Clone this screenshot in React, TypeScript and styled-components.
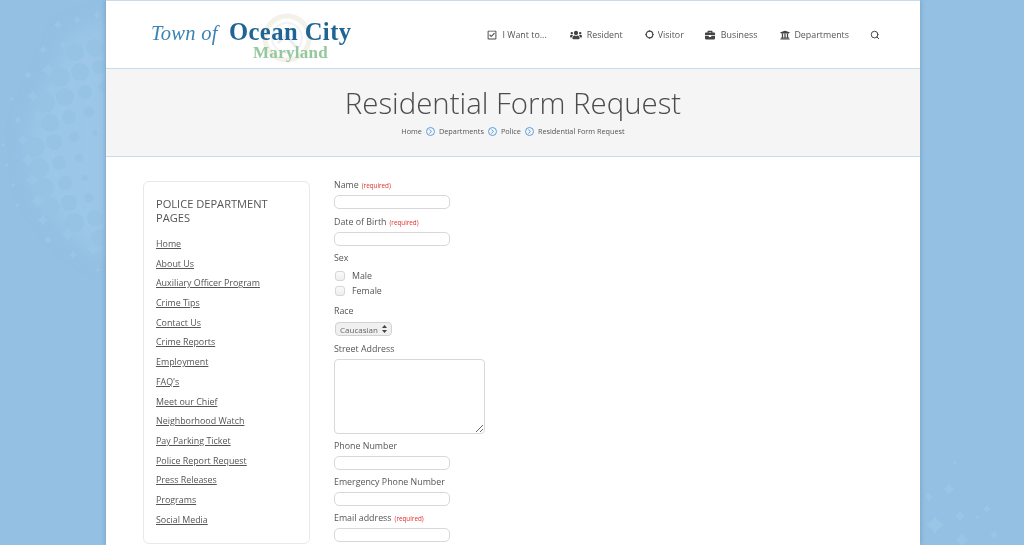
import { createGlobalStyle, styled } from "styled-components";
import {
  FaBriefcase,
  FaRegCheckSquare,
  FaUniversity,
  FaUsers,
} from "react-icons/fa";
import { FiSearch, FiChevronRight } from "react-icons/fi";
import type { ReactNode } from "react";

const GlobalStyle = createGlobalStyle`
  html, body {
    margin: 0;
    height: 545px;
    overflow: hidden;
    background: #93c0e3;
    font-family: "Open Sans", "Liberation Sans", sans-serif;
    color: #555;
  }
  * { box-sizing: border-box; }
`;

const Backdrop = styled.svg`
  position: fixed;
  inset: 0;
  width: 1024px;
  height: 545px;
`;

const Page = styled.div`
  position: relative;
  width: 814px;
  height: 545px;
  margin-left: 106px;
  overflow: hidden;
  background: #fff;
  border-top: 1px solid #c7dcee;
  box-shadow: 0 0 5px rgba(60, 80, 105, 0.35);
`;

const Header = styled.header`
  height: 68px;
  display: flex;
  align-items: flex-start;
  justify-content: space-between;
  padding: 0 40px 0 45px;
  border-bottom: 1px solid #c7dcee;
`;

const Logo = styled.div`
  position: relative;
  width: 206px;
  height: 55px;
  margin-top: 18px;
  font-family: "Liberation Serif", serif;
  white-space: nowrap;
`;

const Seal = styled.svg`
  position: absolute;
  left: 111px;
  top: -6px;
  width: 50px;
  height: 50px;
`;

const LogoLine = styled.div`
  position: relative;
  display: flex;
  align-items: baseline;
  gap: 11px;
  line-height: 26px;
`;

const LogoTown = styled.span`
  font-size: 20.5px;
  font-style: italic;
  color: #3a82b5;
  letter-spacing: 0.3px;
`;

const LogoCity = styled.span`
  font-size: 24.6px;
  font-weight: bold;
  color: #1f6493;
  letter-spacing: 0.45px;
`;

const LogoState = styled.div`
  position: relative;
  margin-left: 102px;
  font-size: 17px;
  line-height: 14px;
  font-weight: bold;
  color: #93c89d;
  letter-spacing: 0.3px;
`;

const Nav = styled.nav`
  display: flex;
  align-items: center;
  height: 67px;
  font-size: 8.9px;
  color: #555;
`;

const NavItem = styled.div<{ $gap: number; $after: number }>`
  display: flex;
  align-items: center;
  gap: ${(p) => p.$gap}px;
  margin-right: ${(p) => p.$after}px;
  svg { color: #444; flex: none; }
`;

const TitleBand = styled.section`
  height: 88px;
  padding-top: 15px;
  background: #f5f5f5;
  border-bottom: 1px solid #c7dcee;
  text-align: center;
`;

const Title = styled.h1`
  margin: 0;
  font-size: 29.4px;
  line-height: 38px;
  font-weight: 300;
  color: #4c4c4c;
`;

const Crumbs = styled.div`
  display: flex;
  justify-content: center;
  align-items: center;
  gap: 4px;
  margin-top: 2px;
  font-size: 7.3px;
  line-height: 14px;
  color: #555;
`;

const CrumbDot = styled.span`
  width: 9px;
  height: 9px;
  display: inline-flex;
  align-items: center;
  justify-content: center;
  border: 1px solid #5a9fe0;
  border-radius: 50%;
  color: #3d8be0;
`;

const Body = styled.main`
  display: flex;
  align-items: flex-start;
  gap: 24px;
  padding: 21px 0 0 37px;
`;

const Sidebar = styled.aside`
  flex: none;
  width: 167px;
  margin-top: 3px;
  padding: 15px 12px 14px 12px;
  background: #fff;
  border: 1px solid #e8e8e8;
  border-radius: 6px;
`;

const SidebarTitle = styled.h3`
  margin: 0 0 9px;
  font-size: 11.1px;
  line-height: 14px;
  font-weight: 400;
  color: #555;
`;

const SideLink = styled.a`
  display: block;
  height: 19.7px;
  font-size: 8.9px;
  line-height: 19.7px;
  color: #555;
  text-decoration: underline;
`;

const Form = styled.form`
  flex: none;
  width: 300px;
`;

const Field = styled.div<{ $after?: number }>`
  margin-bottom: ${(p) => p.$after ?? 5}px;
`;

const Label = styled.label`
  display: block;
  height: 14px;
  margin-bottom: 3px;
  font-size: 8.85px;
  line-height: 15px;
  color: #555;
`;

const Required = styled.span`
  margin-left: 3px;
  font-size: 6.3px;
  color: #e0302a;
`;

const TextInput = styled.input`
  display: block;
  width: 116px;
  height: 14px;
  padding: 0 4px;
  background: #fff;
  border: 1px solid #d8d8d8;
  border-radius: 5px;
  outline: none;
`;

const TextArea = styled.textarea`
  display: block;
  width: 151px;
  height: 75px;
  background: #fff;
  border: 1px solid #d8d8d8;
  border-radius: 4px;
  outline: none;
  resize: both;
  margin: 0;
`;

const CheckRow = styled.div`
  display: flex;
  align-items: center;
  gap: 7px;
  height: 15.5px;
  padding-left: 1px;
  font-size: 8.85px;
  color: #555;
`;

const CheckBox = styled.span`
  width: 10px;
  height: 10px;
  background: linear-gradient(#fafafa, #eeeeee);
  border: 1px solid #d6d6d6;
  border-radius: 3px;
`;

const SelectBox = styled.div`
  display: flex;
  align-items: center;
  justify-content: space-between;
  width: 57px;
  height: 14px;
  margin: 4px 0 0 1px;
  padding: 0 4px 0 4px;
  background: #f0f0f0;
  border: 1px solid #d2d2d2;
  border-radius: 4px;
  font-size: 8px;
  color: #666;
`;

const SelectArrows = styled.svg`
  width: 5px;
  height: 8px;
  color: #444;
`;

const dots: [number, number, number][] = [
  [75, 52, 9], [95, 48, 9], [60, 77, 10], [80, 72, 9], [99, 67, 7], [45, 103, 10],
  [65, 97, 9], [85, 92, 7], [103, 87, 5], [50, 123, 9], [69, 117, 7], [89, 112, 5],
  [35, 147, 10], [54, 142, 8], [74, 137, 5], [95, 133, 3], [39, 168, 10], [59, 163, 7],
  [79, 158, 4], [44, 188, 10], [65, 183, 7], [85, 178, 3], [50, 207, 10], [69, 203, 8],
  [89, 198, 5], [74, 223, 10], [95, 218, 8], [100, 238, 9],
];

const stars: [number, number, number][] = [
  [83, 41, 5], [63, 45, 3], [48, 70, 5], [43, 50, 3], [28, 75, 3], [52, 90, 5],
  [33, 96, 4], [18, 120, 3], [37, 115, 3], [23, 140, 4], [28, 160, 5], [32, 180, 5],
  [38, 201, 5], [43, 220, 4], [68, 234, 5], [93, 249, 5], [48, 240, 3], [73, 255, 3],
  [58, 25, 3], [77, 20, 3], [97, 15, 3], [12, 99, 2], [7, 165, 2], [13, 185, 2],
  [17, 205, 2], [3, 145, 2], [98, 270, 2],
  [929, 497, 3], [955, 463, 2], [949, 489, 4], [928, 495, 2], [960, 516, 4],
  [987, 509, 3], [994, 535, 3], [977, 517, 2], [935, 525, 7], [962, 540, 5],
];

const starPath = (x: number, y: number, r: number) =>
  `M${x} ${y - r}Q${x + r * 0.35} ${y - r * 0.35} ${x + r} ${y}Q${x + r * 0.35} ${y + r * 0.35} ${x} ${y + r}Q${x - r * 0.35} ${y + r * 0.35} ${x - r} ${y}Q${x - r * 0.35} ${y - r * 0.35} ${x} ${y - r}Z`;

const links = [
  "Home",
  "About Us",
  "Auxiliary Officer Program",
  "Crime Tips",
  "Contact Us",
  "Crime Reports",
  "Employment",
  "FAQ's",
  "Meet our Chief",
  "Neighborhood Watch",
  "Pay Parking Ticket",
  "Police Report Request",
  "Press Releases",
  "Programs",
  "Social Media",
];

const crumbs = ["Home", "Departments", "Police", "Residential Form Request"];

function VisitorIcon() {
  return (
    <svg width="9" height="9" viewBox="0 0 18 18" fill="none">
      <circle cx="9" cy="9" r="6.6" stroke="currentColor" strokeWidth="2.4" />
      <path
        d="M9 0v3M9 15v3M0 9h3M15 9h3"
        stroke="currentColor"
        strokeWidth="1.4"
      />
    </svg>
  );
}

function TextField(props: { label: string; required?: boolean; after?: number }) {
  return (
    <Field $after={props.after}>
      <Label>
        {props.label}
        {props.required && <Required>(required)</Required>}
      </Label>
      <TextInput type="text" />
    </Field>
  );
}

function NavEntry(props: {
  icon: ReactNode;
  label: string;
  gap: number;
  after: number;
}) {
  return (
    <NavItem $gap={props.gap} $after={props.after}>
      {props.icon}
      {props.label}
    </NavItem>
  );
}

export default function App() {
  return (
    <>
      <GlobalStyle />
      <Backdrop viewBox="0 0 1024 545">
        <defs>
          <filter id="soft" x="-30%" y="-30%" width="160%" height="160%">
            <feGaussianBlur stdDeviation="10" />
          </filter>
        </defs>
        <path
          d="M70 35L110 20V260L75 240L35 190L28 130Z"
          fill="#9cc6e7"
          filter="url(#soft)"
        />
        <g fill="#96c2e4">
          {dots.map(([x, y, r]) => (
            <circle key={`${x}-${y}`} cx={x} cy={y} r={r} />
          ))}
        </g>
        <g fill="#9bc5e6">
          {stars.map(([x, y, r]) => (
            <path key={`${x}-${y}`} d={starPath(x, y, r * 1.3)} />
          ))}
        </g>
      </Backdrop>
      <Page>
        <Header>
          <Logo>
            <Seal viewBox="0 0 50 50" fill="none">
              <circle cx="25" cy="25" r="22" stroke="#f3f1e8" strokeWidth="5" />
              <circle cx="25" cy="25" r="15" stroke="#f0f2f5" strokeWidth="2" />
              <path d="M16 30l8-8 10 12" stroke="#ebeef1" strokeWidth="3" />
            </Seal>
            <LogoLine>
              <LogoTown>Town of</LogoTown>
              <LogoCity>Ocean City</LogoCity>
            </LogoLine>
            <LogoState>Maryland</LogoState>
          </Logo>
          <Nav>
            <NavEntry icon={<FaRegCheckSquare size={10} />} label="I Want to..." gap={5} after={23} />
            <NavEntry icon={<FaUsers size={12} />} label="Resident" gap={5} after={22} />
            <NavEntry icon={<VisitorIcon />} label="Visitor" gap={4} after={21} />
            <NavEntry icon={<FaBriefcase size={10} />} label="Business" gap={6} after={23} />
            <NavEntry icon={<FaUniversity size={10} />} label="Departments" gap={4} after={21} />
            <FiSearch size={10} color="#444" strokeWidth={2.4} />
          </Nav>
        </Header>
        <TitleBand>
          <Title>Residential Form Request</Title>
          <Crumbs>
            {crumbs.map((crumb, i) => (
              <span key={crumb} style={{ display: "contents" }}>
                {crumb}
                {i < crumbs.length - 1 && (
                  <CrumbDot>
                    <FiChevronRight size={7} strokeWidth={3} />
                  </CrumbDot>
                )}
              </span>
            ))}
          </Crumbs>
        </TitleBand>
        <Body>
          <Sidebar>
            <SidebarTitle>POLICE DEPARTMENT PAGES</SidebarTitle>
            {links.map((link) => (
              <SideLink key={link}>{link}</SideLink>
            ))}
          </Sidebar>
          <Form>
            <TextField label="Name" required after={6} />
            <TextField label="Date of Birth" required />
            <Field $after={5}>
              <Label>Sex</Label>
              <CheckRow>
                <CheckBox />
                Male
              </CheckRow>
              <CheckRow>
                <CheckBox />
                Female
              </CheckRow>
            </Field>
            <Field $after={6}>
              <Label>Race</Label>
              <SelectBox>
                Caucasian
                <SelectArrows viewBox="0 0 5 8" fill="currentColor">
                  <path d="M2.5 0L5 3H0zM2.5 8L0 5h5z" />
                </SelectArrows>
              </SelectBox>
            </Field>
            <Field>
              <Label>Street Address</Label>
              <TextArea />
            </Field>
            <TextField label="Phone Number" />
            <TextField label="Emergency Phone Number" />
            <TextField label="Email address" required />
          </Form>
        </Body>
      </Page>
    </>
  );
}
